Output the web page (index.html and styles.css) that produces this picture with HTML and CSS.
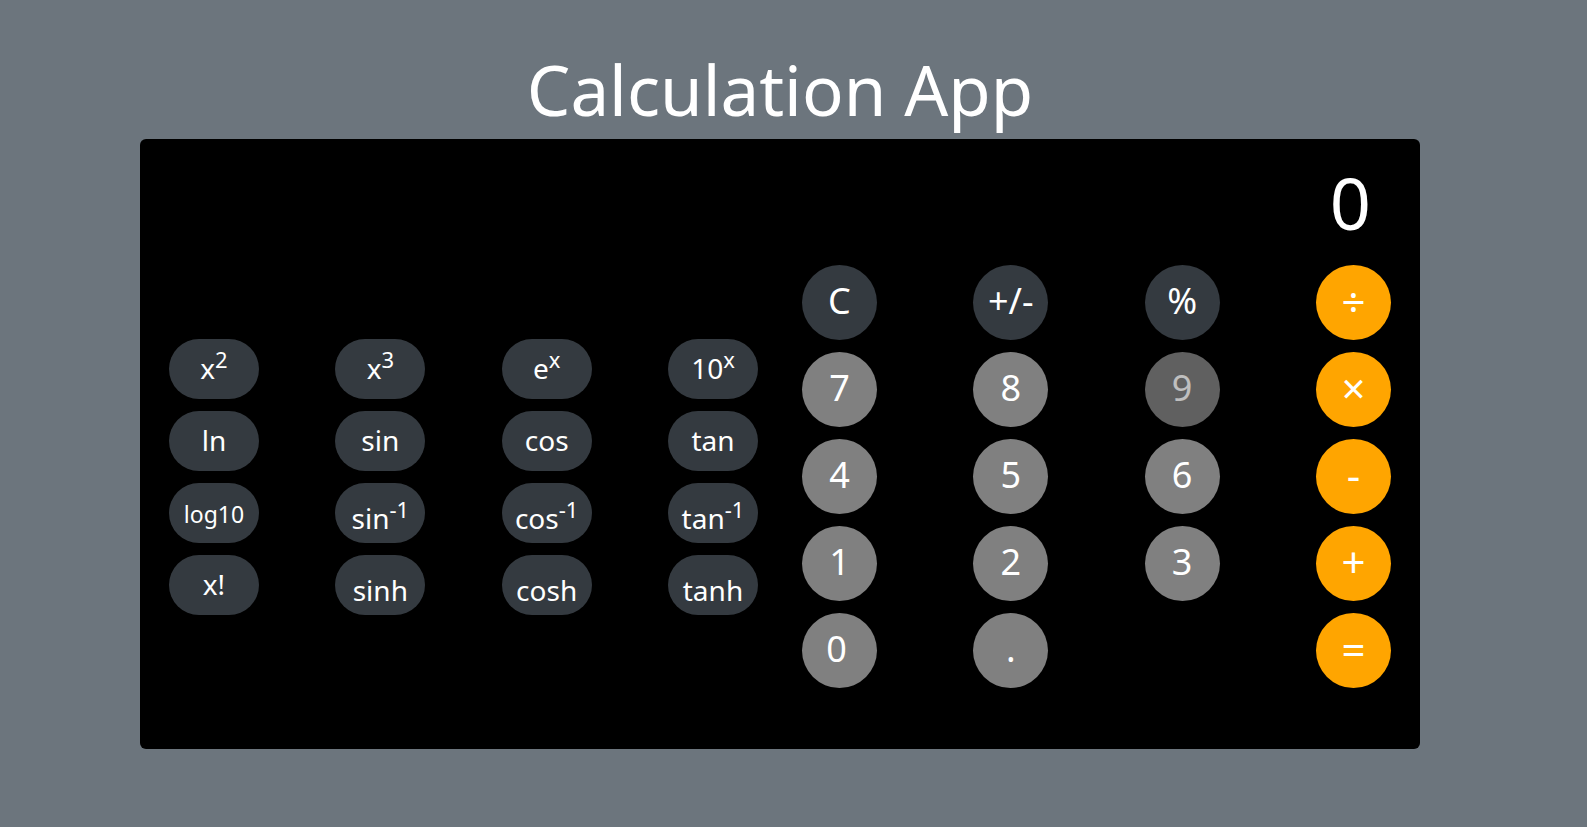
FILE: index.html
```html
<!DOCTYPE html>
<html lang="en">
<head>
<meta charset="utf-8">
<title>Calculation App</title>
<meta name="viewport" content="width=device-width, initial-scale=1">
<link rel="stylesheet" href="styles.css">
</head>
<body>
<main class="app">
  <h1 class="title">Calculation App</h1>
  <section class="calculator" aria-label="Calculator">
    <output class="display">0</output>
    <div class="pads">
      <div class="pad pad-functions">
        <button type="button" class="key fn">x<sup>2</sup></button>
        <button type="button" class="key fn">x<sup>3</sup></button>
        <button type="button" class="key fn">e<sup>x</sup></button>
        <button type="button" class="key fn">10<sup>x</sup></button>
        <button type="button" class="key fn">ln</button>
        <button type="button" class="key fn">sin</button>
        <button type="button" class="key fn">cos</button>
        <button type="button" class="key fn">tan</button>
        <button type="button" class="key fn fn-small">log10</button>
        <button type="button" class="key fn fn-low">sin<sup>-1</sup></button>
        <button type="button" class="key fn fn-low">cos<sup>-1</sup></button>
        <button type="button" class="key fn fn-low">tan<sup>-1</sup></button>
        <button type="button" class="key fn">x!</button>
        <button type="button" class="key fn fn-low">sinh</button>
        <button type="button" class="key fn fn-low">cosh</button>
        <button type="button" class="key fn fn-low">tanh</button>
      </div>
      <div class="pad pad-numbers">
        <button type="button" class="key round dark">C</button>
        <button type="button" class="key round dark">+/-</button>
        <button type="button" class="key round dark">%</button>
        <button type="button" class="key round operator">÷</button>
        <button type="button" class="key round">7</button>
        <button type="button" class="key round">8</button>
        <button type="button" class="key round active">9</button>
        <button type="button" class="key round operator">×</button>
        <button type="button" class="key round">4</button>
        <button type="button" class="key round">5</button>
        <button type="button" class="key round">6</button>
        <button type="button" class="key round operator">-</button>
        <button type="button" class="key round">1</button>
        <button type="button" class="key round">2</button>
        <button type="button" class="key round">3</button>
        <button type="button" class="key round operator">+</button>
        <button type="button" class="key round zero">0</button>
        <button type="button" class="key round">.</button>
        <button type="button" class="key round operator equals">=</button>
      </div>
    </div>
  </section>
</main>
</body>
</html>
```
FILE: styles.css
```css
* {
  box-sizing: border-box;
}

body {
  margin: 0;
  padding: 46px 27px 48px 0;
  min-height: 100vh;
  background: #6c757d;
  color: #fff;
  font-family: "Segoe UI", "Noto Sans", "Open Sans", sans-serif;
}

.app {
  max-width: 1280px;
  margin: 0 auto;
}

.title {
  margin: 0;
  padding-bottom: 7px;
  font-size: 69px;
  font-weight: 400;
  line-height: 86px;
  text-align: center;
}

.calculator {
  padding: 20px 29px 61px;
  border-radius: 6px;
  background: #000;
}

.display {
  display: block;
  padding: 0 20px 20px 0;
  font-size: 72px;
  line-height: 86px;
  text-align: right;
}

.pads {
  display: grid;
  grid-template-columns: 1fr 1fr;
  gap: 44px;
  align-items: center;
}

.pad {
  display: grid;
  grid-template-columns: repeat(4, auto);
  justify-content: space-between;
  gap: 12px 0;
}

.key {
  display: flex;
  align-items: center;
  justify-content: center;
  border: 0;
  padding: 0;
  color: #fff;
  font: inherit;
  cursor: pointer;
}

.fn {
  width: 90px;
  height: 60px;
  padding-bottom: 2px;
  border-radius: 30px;
  background: #343a40;
  font-size: 28px;
  line-height: 40px;
}

.fn sup {
  align-self: center;
  padding-bottom: 18px;
  font-size: 22px;
  line-height: 24px;
}

.fn-small {
  padding: 2px 0 0;
  font-size: 23px;
}

.fn-low {
  padding-top: 12px;
}

.round {
  width: 75px;
  height: 75px;
  padding-bottom: 4px;
  border-radius: 50%;
  background: #808080;
  font-size: 36px;
  line-height: 48px;
}

.dark {
  background: #343a40;
}

.operator {
  background: #ffa500;
  font-size: 42px;
}

.active {
  opacity: 0.75;
}

.zero {
  padding-right: 6px;
}

.equals {
  grid-column: 4;
}
```
